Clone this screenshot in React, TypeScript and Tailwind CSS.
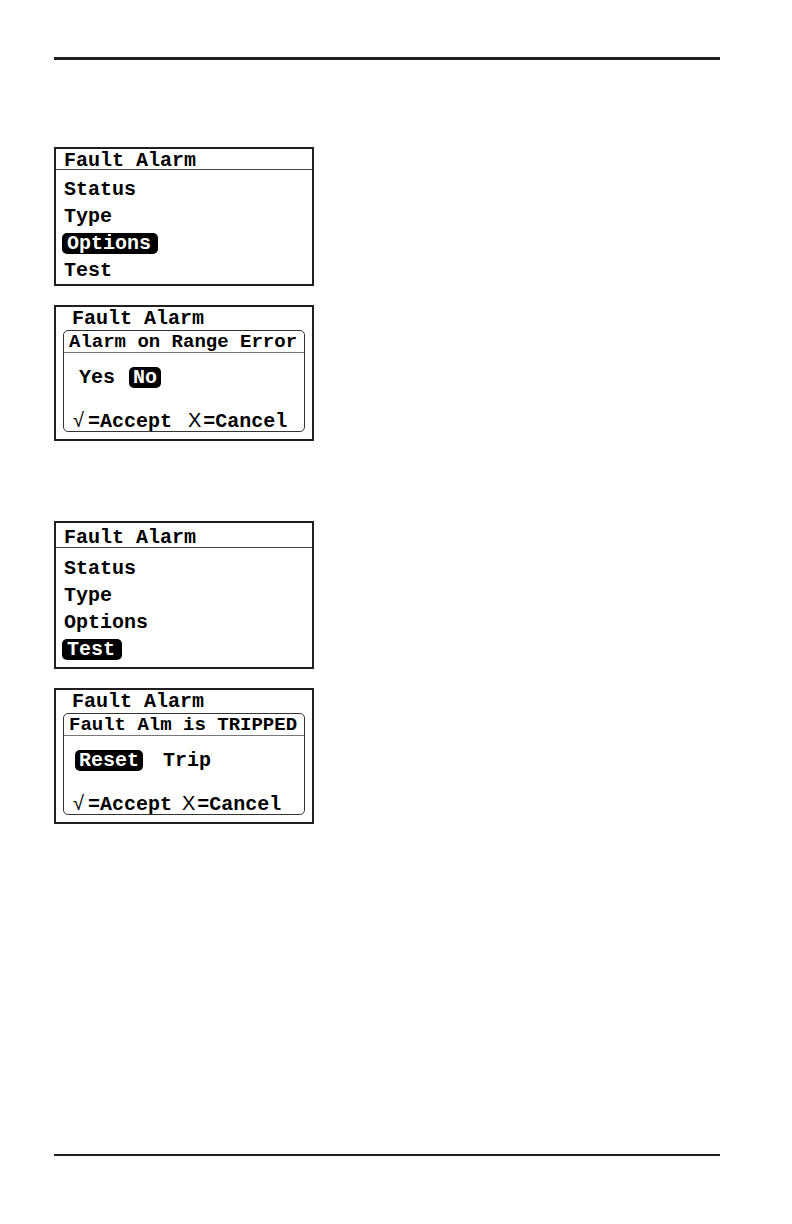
import { clsx } from 'clsx';

type MenuScreenProps = {
  title: string;
  items: string[];
  selected: string;
  tall?: boolean;
};

type DialogScreenProps = {
  title: string;
  message: string;
  choices: string[];
  selected: string;
  wide?: boolean;
};

const menuItems = ['Status', 'Type', 'Options', 'Test'];

// List menu on the display, one highlighted row
function MenuScreen({ title, items, selected, tall }: MenuScreenProps) {
  return (
    <section className="w-[260px] border-2 border-[#231f20]">
      <h2
        className={clsx(
          'border-b border-[#444444] pl-2',
          tall ? 'h-[25px] leading-[30px]' : 'h-[21px] leading-6',
        )}
      >
        {title}
      </h2>
      <ul className={clsx('pl-1.5', tall ? 'pt-[7px] pb-1' : 'pt-1.5')}>
        {items.map((item) => (
          <li key={item} className="flex h-[27px] items-center">
            <button
              type="button"
              className={clsx(
                item === selected
                  ? 'h-[21px] rounded-[5px] bg-black pr-[7px] pl-[5px] leading-[19px] text-white'
                  : 'pl-0.5 leading-[27px]',
              )}
            >
              {item}
            </button>
          </li>
        ))}
      </ul>
    </section>
  );
}

// Edit box laid over the menu title
function DialogScreen({ title, message, choices, selected, wide }: DialogScreenProps) {
  return (
    <section className="w-[260px] border-2 border-[#231f20] px-[7px] pb-[7px]">
      <h2 className="h-[23px] pl-[9px] leading-[23px]">{title}</h2>
      <div className="h-[102px] rounded-[5px] border border-[#333333]">
        <h3 className="h-[22px] border-b border-[#777777] pl-[5px] text-[19px] leading-[22px]">{message}</h3>
        <div className={clsx('mt-3.5 flex pl-[11px]', wide ? 'gap-4' : 'gap-2.5')}>
          {choices.map((choice) => (
            <button
              key={choice}
              type="button"
              className={clsx(
                'h-[21px] rounded-[5px] px-1 leading-[19px]',
                choice === selected && 'bg-black text-white',
              )}
            >
              {choice}
            </button>
          ))}
        </div>
        <div className={clsx('mt-[21px] flex pl-[9px] leading-[22px]', wide ? 'gap-2.5' : 'gap-4')}>
          <button type="button" className="flex items-baseline gap-1">
            <span className="font-['Liberation_Sans',sans-serif] font-normal">√</span>
            <span>=Accept</span>
          </button>
          <button type="button" className="flex items-baseline gap-0.5">
            <span className="font-['Liberation_Sans',sans-serif] font-normal">X</span>
            <span>=Cancel</span>
          </button>
        </div>
      </div>
    </section>
  );
}

export default function App() {
  return (
    <main className="flex min-h-screen flex-col bg-white pt-[57px] pr-[72px] pb-[68px] pl-[54px] font-['Courier_New','Liberation_Mono',monospace] text-xl font-bold text-black">
      <hr className="border-t-[3px] border-[#231f20]" />

      <div className="mt-[87px] flex flex-col gap-[19px]">
        <MenuScreen title="Fault Alarm" items={menuItems} selected="Options" />
        <DialogScreen
          title="Fault Alarm"
          message="Alarm on Range Error"
          choices={['Yes', 'No']}
          selected="No"
        />
      </div>

      <div className="mt-20 flex flex-col gap-[19px]">
        <MenuScreen title="Fault Alarm" items={menuItems} selected="Test" tall />
        <DialogScreen
          title="Fault Alarm"
          message="Fault Alm is TRIPPED"
          choices={['Reset', 'Trip']}
          selected="Reset"
          wide
        />
      </div>

      <hr className="mt-auto border-t-2 border-[#231f20]" />
    </main>
  );
}
